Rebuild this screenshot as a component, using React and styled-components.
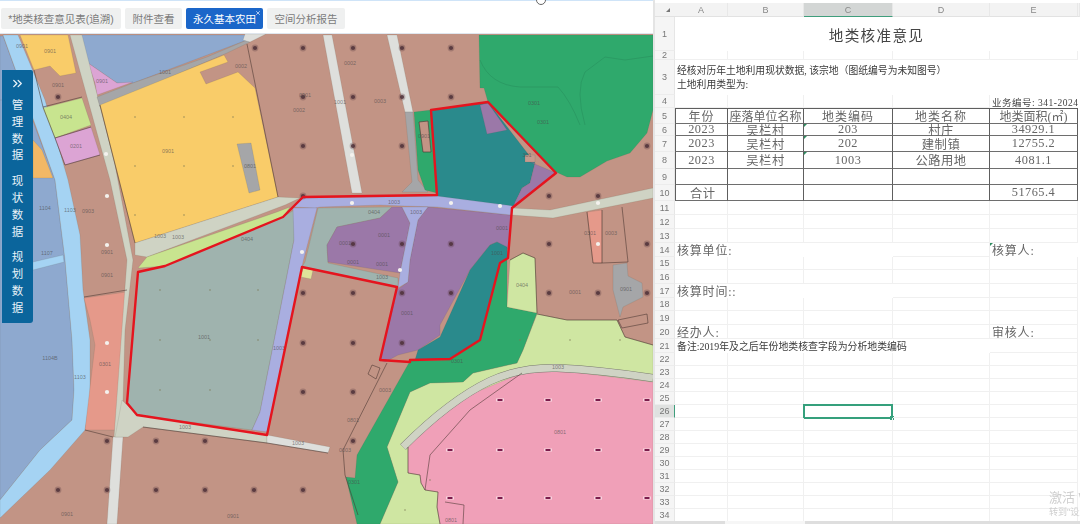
import React from 'react'
import styled, { createGlobalStyle } from 'styled-components'
import { ChevronsRight, X } from 'lucide-react'

const GlobalStyle = createGlobalStyle`
  html, body { margin: 0; padding: 0; background: #fff; overflow: hidden; }
  body { font-family: "Liberation Sans", "Noto Sans CJK SC", sans-serif; }
`

const Page = styled.div`
  width: 1080px;
  height: 524px;
  display: flex;
  overflow: hidden;
  filter: blur(0.4px);
`
const LeftPane = styled.div`
  position: relative;
  width: 653px;
  flex: none;
  display: flex;
  flex-direction: column;
  border-right: 2px solid #e4e4e4;
`
const TabBar = styled.div`
  height: 34px;
  flex: none;
  box-sizing: border-box;
  border-top: 1px solid #cfe4f8;
  padding: 7px 0 0 1px;
  display: flex;
  align-items: flex-start;
  gap: 4px;
  background: #fff;
  border-bottom: 1px solid #dfe6ee;
`
const Tab = styled.div`
  position: relative;
  height: 21px;
  width: ${p => p.$w}px;
  box-sizing: border-box;
  display: flex;
  align-items: center;
  justify-content: center;
  border-radius: 2px;
  font-size: 10.5px;
  white-space: nowrap;
  background: ${p => (p.$active ? '#1b66c9' : '#eff0f0')};
  color: ${p => (p.$active ? '#fff' : '#7b7b7b')};
`
const TabClose = styled(X)`
  position: absolute;
  top: 2px;
  right: 2px;
  width: 6px;
  height: 6px;
  color: #dfeaff;
`
const Cursor = styled.div`
  position: absolute;
  left: 536px;
  top: -5px;
  width: 8px;
  height: 8px;
  border: 1px solid #666;
  border-radius: 50%;
  background: #fff;
`
const MapSvg = styled.svg`
  display: block;
  width: 653px;
  height: 490px;
  background: #c29485;
`
const SideNav = styled.div`
  position: absolute;
  left: 2px;
  top: 70px;
  width: 31px;
  height: 253px;
  box-sizing: border-box;
  background: #0b659c;
  border-radius: 0 2px 3px 0;
  padding-top: 6px;
  display: flex;
  flex-direction: column;
  align-items: center;
  color: #e8f2f8;
`
const NavGroup = styled.div`
  display: flex;
  flex-direction: column;
  align-items: center;
  margin-top: ${p => p.$top}px;
`
const NavChar = styled.span`
  height: 16.8px;
  line-height: 16.8px;
  font-size: 11.5px;
`

const Sheet = styled.div`
  position: relative;
  flex: 1;
  min-width: 0;
  height: 524px;
  overflow: hidden;
  background: #fff;
  padding-top: 3px;
  box-sizing: border-box;
  font-family: "Liberation Serif", "Noto Sans CJK SC", serif;
`
const SheetRow = styled.div`
  display: grid;
  grid-template-columns: 20px 53px 76px 89px 97px 88px 2px;
  grid-template-rows: ${p => p.$h}px;
  height: ${p => p.$h}px;
`
const CornerHead = styled.div`
  background: #f3f3f3;
  border-bottom: 1px solid #e2e2e2;
  position: relative;
  &::after {
    content: '';
    position: absolute;
    right: 5px;
    bottom: 4px;
    border-left: 4px solid transparent;
    border-bottom: 4px solid #777;
  }
`
const ColHead = styled.div`
  display: flex;
  align-items: center;
  justify-content: center;
  font: 9px "Liberation Sans", sans-serif;
  color: #888;
  box-sizing: border-box;
  background: ${p => (p.$on ? '#d3d6d5' : '#f3f3f3')};
  border-bottom: ${p => (p.$on ? '1.5px solid #3f9e7c' : '1px solid #e2e2e2')};
  border-right: 1px solid #e8e8e8;
`
const RowHead = styled.div`
  display: flex;
  align-items: center;
  justify-content: center;
  font: 9px "Liberation Sans", sans-serif;
  color: #777;
  box-sizing: border-box;
  background: ${p => (p.$on ? '#dfe1e0' : '#f5f5f5')};
  border-right: ${p => (p.$on ? '1.5px solid #3f9e7c' : '1px solid #e6e6e6')};
  border-bottom: 1px solid #ececec;
`
const Cell = styled.div`
  position: relative;
  grid-column: span ${p => p.$span || 1};
  box-sizing: border-box;
  min-width: 0;
  border-right: ${p => (p.$plain ? 'none' : '1px solid #f0f0f0')};
  border-bottom: ${p => (p.$plain ? 'none' : '1px solid #f0f0f0')};
`
const TitleCell = styled(Cell)`
  display: flex;
  align-items: center;
  justify-content: center;
  font-size: 14.6px;
  letter-spacing: 1.3px;
  color: #444;
`
const NoteCell = styled(Cell)`
  display: flex;
  flex-direction: column;
  justify-content: center;
  padding-left: 2px;
  font-size: 9.8px;
  line-height: 13.5px;
  color: #3a3a3a;
  white-space: nowrap;
`
const NumberCell = styled(Cell)`
  display: flex;
  align-items: center;
  font-size: 9.5px;
  letter-spacing: 0.5px;
  color: #444;
  white-space: nowrap;
  padding-left: 2px;
`
const BoxCell = styled.div`
  position: relative;
  box-sizing: border-box;
  min-width: 0;
  display: flex;
  align-items: center;
  justify-content: ${p => (p.$left ? 'flex-start' : 'center')};
  padding-left: ${p => (p.$left ? 14 : 0)}px;
  font-size: 12.3px;
  letter-spacing: 0.5px;
  color: #666;
  white-space: nowrap;
  border-right: 1.5px solid #5e5e5e;
  border-bottom: 1.5px solid #6e6e6e;
  border-left: ${p => (p.$first ? '1.5px solid #5e5e5e' : 'none')};
  border-top: ${p => (p.$top ? '1.5px solid #5e5e5e' : 'none')};
  &::before {
    content: '';
    display: ${p => (p.$flag ? 'block' : 'none')};
    position: absolute;
    left: 0;
    top: 0;
    border-top: 3px solid #2f8c60;
    border-right: 3px solid transparent;
  }
`
const HeadText = styled.span`
  font-size: 12px;
  letter-spacing: ${p => p.$gap || 0}px;
`
const FormCell = styled(Cell)`
  display: flex;
  align-items: center;
  padding-left: 2px;
  font-size: 12px;
  letter-spacing: 0.8px;
  color: #666;
  white-space: nowrap;
  &::before {
    content: '';
    display: ${p => (p.$flag ? 'block' : 'none')};
    position: absolute;
    left: 0;
    top: 0;
    border-top: 3px solid #2f8c60;
    border-right: 3px solid transparent;
  }
`
const RemarkCell = styled(Cell)`
  display: flex;
  align-items: center;
  padding-left: 2px;
  font-size: 9.9px;
  color: #3a3a3a;
  white-space: nowrap;
`
const SelectedCell = styled(Cell)`
  border: 2px solid #35a07c;
  margin: -1px 0 -1px -1px;
  &::after {
    content: '';
    position: absolute;
    right: -3px;
    bottom: -3px;
    width: 4px;
    height: 4px;
    background: #35a07c;
  }
`
const ScrollTrack = styled.div`
  position: absolute;
  left: 0;
  right: 0;
  bottom: 0;
  height: 3px;
  background: #dedede;
`
const ScrollThumb = styled.div`
  width: 80px;
  height: 3px;
  margin-left: 70px;
  background: #f6f6f6;
`
const Watermark = styled.div`
  position: absolute;
  left: 394px;
  top: 489px;
  color: #cfcfcf;
  white-space: nowrap;
  font-family: "Liberation Sans", "Noto Sans CJK SC", sans-serif;
  font-size: 13px;
  line-height: 17px;
`
const WatermarkSub = styled.div`
  font-size: 9px;
  line-height: 12px;
`

const P = {
  water: '#8ea9cf', river: '#a5d3f3', road: '#cfd3c4', white: '#dedfdc', gray: '#a5a6a8',
  yellow: '#f9cc69', lime: '#c8e48f', pale: '#cfe6a2', pink: '#dca4d4', salmon: '#e5998a',
  green: '#2fa96c', teal: '#2a8a8c', purple: '#9b78a8', sage: '#9fb3ae', lav: '#a9aee0', rose: '#f0a0b8',
}

const shapes = [
  [P.water, '0,36 3,36 30,110 0,110'],
  [P.water, '0,100 25,100 55,180 65,260 72,340 74,390 72,420 40,450 0,500'],
  [P.water, '80,35 253,35 247,40 133,83 117,83 88,63'],
  [P.river, '3,35 18,35 45,100 68,180 80,235 83,290 90,340 90,400 85,430 50,470 0,518 0,500 40,450 72,420 74,390 72,340 65,260 55,180 30,110'],
  [P.river, '33,262 63,255 64,262 33,270'],
  ['#f2b866', '33,140 42,150 53,178 33,178'],
  [P.yellow, '20,35 68,35 76,73 60,76 50,66 34,70'],
  [P.pink, '88,63 117,83 133,82 97,95 95,83'],
  [P.lime, '43,108 82,98 91,125 55,138'],
  [P.pink, '55,138 91,127 100,155 65,165'],
  [P.salmon, '84,298 126,292 115,430 85,430 95,345 90,320'],
  [P.road, '70,35 82,35 115,165 133,260 125,330 122,436 114,437 127,260 110,180'],
  [P.white, '113,437 123,437 117,524 107,524'],
  [P.gray, '97,97 133,83 207,57 247,40 250,42 227,53 100,107'],
  [P.yellow, '100,105 224,55 228,62 200,72 206,84 238,72 255,88 278,197 135,243'],
  [P.gray, '237,144 251,143 260,190 249,193'],
  [P.white, '245,34 266,34 250,42 243,40'],
  [P.white, '323,35 332,35 362,193 352,193'],
  [P.white, '387,35 397,35 413,112 405,112'],
  [P.gray, '405,112 413,112 418,180 428,192 402,192 412,182'],
  [P.green, '479,35 653,35 653,110 647,133 630,153 607,161 580,177 567,177 556,172 488,102 484,88 480,88'],
  [P.green, '414,112 431,110 437,193 425,190 418,170'],
  ['#c29485', '419,122 428,121 431,152 423,152'],
  [P.teal, '431,110 488,102 535,163 530,183 522,188 513,208 437,197'],
  [P.purple, '480,105 488,103 507,130 487,134'],
  [P.purple, '530,162 556,173 513,208 515,202 522,188 530,183 535,163'],
  ['#c79a8e', '525,155 535,155 535,162 525,162'],
  [P.road, '512,208 550,210 653,188 653,198 553,218 512,215'],
  [P.road, '135,243 278,197 300,198 285,205 147,257 135,255'],
  [P.lime, '138,268 147,257 277,212 290,207 283,217 165,266'],
  [P.sage, '138,272 165,266 283,217 294,210 294,240 260,412 252,430 137,415 127,403'],
  [P.road, '127,405 137,415 267,435 267,443 143,427 128,437 115,437 122,400'],
  [P.white, '267,435 330,447 328,453 267,443'],
  [P.sage, '318,208 392,207 380,218 337,227 327,245 328,263 398,278 398,287 302,267 305,262'],
  [P.purple, '337,227 380,218 392,207 402,207 410,223 400,273 328,262 327,245'],
  [P.purple, '428,207 511,215 509,250 497,242 490,245 470,270 440,325 440,335 418,350 398,355 385,362 380,360 397,290 408,282 410,260 418,220'],
  [P.teal, '497,242 507,247 508,258 500,263 480,340 450,359 415,360 418,350 440,337 470,270 490,245'],
  [P.lav, '293,207 303,198 437,196 513,206 511,215 437,207 405,206 380,205 320,207 315,208'],
  [P.lav, '293,208 317,208 303,262 268,432 252,430 260,412 294,240'],
  [P.lav, '402,207 428,207 418,220 410,260 408,282 398,288 400,273 410,223'],
  ['#dfe29a', '303,268 313,270 311,279 301,277'],
  [P.salmon, '587,212 602,210 602,263 593,263'],
  [P.gray, '613,265 627,263 628,276 642,283 643,297 623,307 620,317 613,290'],
  [P.pale, '537,314 567,320 617,320 625,337 653,345 653,524 380,524 398,482 387,447 410,392 430,383 463,382 473,373 517,363 523,350'],
  [P.green, '410,361 450,360 480,340 500,263 507,259 507,307 537,313 523,350 517,363 473,373 463,382 430,383 410,392 387,447 398,482 380,524 357,524 346,477 355,478 357,455'],
  [P.pale, '510,260 523,253 535,258 537,313 507,307'],
  [P.rose, '522,373 557,370 653,382 653,524 440,524 437,507 438,492 425,490 421,483 420,475 408,473 408,447 450,403'],
]

const lines = [
  '247,44 278,197', '34,70 43,107 55,138 65,165', '43,107 82,97', '55,138 91,127', '65,165 100,155',
  '84,297 127,290', '85,430 113,437', '100,105 135,243', '143,427 267,443', '267,443 328,453',
  '587,212 593,263 602,263 602,210', '622,207 628,262 602,263', '537,314 567,320 617,320 625,337 653,345',
  '618,320 647,314 648,323 622,328 618,320', '372,365 380,368 376,379 368,374 372,365',
  '387,363 343,450 345,475 358,515', '510,260 523,253 535,258 537,313', '419,122 428,121 431,152 423,152 419,122',
  '522,373 470,410 430,455 425,490', '445,502 464,505 463,524', '408,447 408,473 420,475 421,483 425,490 438,492 437,507 440,524',
]

const brownDots = [
  [255, 48], [303, 48], [353, 48], [402, 48], [451, 48],
  [58, 97], [303, 97], [353, 97], [402, 97], [451, 97],
  [303, 146], [353, 146], [402, 146], [647, 146],
  [303, 196], [549, 196], [598, 196],
  [353, 244], [402, 244], [451, 244], [549, 244], [647, 244],
  [353, 293], [402, 293], [451, 293], [549, 293], [598, 293], [647, 293],
  [303, 293], [303, 343], [353, 343], [402, 343], [303, 392], [353, 392], [353, 441],
  [107, 441], [156, 441], [205, 441],
  [58, 490], [107, 490], [156, 490], [205, 490], [254, 490], [303, 490],
]
const whiteDots = [
  [106, 154], [107, 196], [107, 245], [107, 343], [107, 392], [598, 203], [598, 244],
  [352, 155], [352, 203], [451, 203], [500, 206], [302, 252], [400, 270],
]
const pinkDots = [
  [500, 400], [548, 400], [598, 400], [647, 400],
  [450, 450], [500, 450], [548, 450], [598, 450], [647, 450],
  [450, 498], [500, 498], [548, 498], [598, 498], [647, 498],
]
const faintDots = [
  [135, 117], [184, 117], [233, 117], [135, 166], [184, 166], [233, 166], [135, 215], [184, 215],
  [160, 290], [210, 290], [258, 290], [160, 340], [210, 340], [258, 340], [160, 390], [210, 390],
  [520, 340], [570, 340], [620, 340], [430, 480], [405, 510],
]

const labels = [
  [22, 48, '0901'], [50, 53, '0901'], [58, 87, '0901'], [66, 119, '0404'], [76, 148, '0201'],
  [102, 83, '0901'], [168, 153, '0901'], [165, 74, '1001'], [241, 68, '0002'], [299, 112, '0002'],
  [350, 65, '0002'], [340, 104, '1001'], [250, 168, '0801'], [88, 213, '0903'], [107, 254, '0901'],
  [107, 277, '0901'], [45, 210, '1104'], [70, 212, '1103'], [47, 255, '1107'], [50, 360, '1104B'],
  [80, 379, '1103'], [105, 366, '0301'], [178, 239, '1003'], [160, 238, '1003'], [247, 241, '0404'],
  [204, 339, '1001'], [279, 350, '1003'], [185, 429, '1003'], [298, 445, '1003'], [67, 516, '0901'],
  [233, 518, '0901'], [305, 97, '0901'], [380, 103, '0003'], [543, 124, '0301'], [424, 138, '0901'],
  [394, 204, '1003'], [416, 214, '1003'], [374, 214, '0404'], [384, 237, '0001'], [345, 245, '0001'],
  [353, 264, '0001'], [382, 266, '0001'], [382, 279, '1003'], [502, 230, '0001'], [497, 255, '1001'],
  [407, 315, '0001'], [522, 287, '0404'], [575, 294, '0001'], [611, 235, '0003'], [590, 235, '0301'],
  [626, 291, '0901'], [457, 363, '0301'], [558, 369, '1003'], [385, 392, '0003'], [345, 452, '0003'],
  [353, 422, '0801'], [560, 434, '0801'], [451, 522, '0801'], [534, 105, '0301'], [354, 484, '0301'],
  [527, 157, '301'],
]

const boundary = '303,197 437,195 431,110 488,102 556,173 512,208 508,258 500,263 480,340 450,359 410,360 410,362 380,360 397,287 302,267 267,435 137,415 127,403 138,272 165,266 283,217'
const curveRoad = 'M403 447 Q450 400 490 381 Q520 367 557 368 Q600 370 653 378'

function LandMap() {
  return (
    <MapSvg viewBox="0 34 653 490">
      {shapes.map(([fill, pts], i) => (
        <polygon key={i} points={pts} fill={fill} stroke="#4d4d40" strokeOpacity="0.25" strokeWidth="0.5" />
      ))}
      <path d={curveRoad} fill="none" stroke="#77786c" strokeWidth="8" />
      <path d={curveRoad} fill="none" stroke={P.road} strokeWidth="7" />
      <path d="M480 60 Q490 85 520 87 L558 87 Q570 100 580 125 M585 125 Q575 90 585 72 L605 57 L625 60 L653 56" fill="none" stroke="#23794f" strokeOpacity="0.5" strokeWidth="0.6" />
      {lines.map((pts, i) => (
        <polyline key={i} points={pts} fill="none" stroke="#4a3530" strokeOpacity="0.7" strokeWidth="0.8" />
      ))}
      {faintDots.map(([x, y], i) => (
        <circle key={i} cx={x} cy={y} r="0.9" fill="#7c7a55" opacity="0.5" />
      ))}
      {brownDots.map(([x, y], i) => (
        <g key={i}>
          <circle cx={x} cy={y} r="3.4" fill="#5b3a42" opacity="0.3" />
          <circle cx={x} cy={y} r="2.1" fill="#4d3038" opacity="0.85" />
        </g>
      ))}
      {whiteDots.map(([x, y], i) => (
        <circle key={i} cx={x} cy={y} r="2.1" fill="#f4f2ee" />
      ))}
      {pinkDots.map(([x, y], i) => (
        <g key={i}>
          <rect x={x - 4} y={y - 1.5} width="8" height="3" fill="#fff" opacity="0.55" />
          <rect x={x - 2.5} y={y - 1} width="5" height="2" fill="#7a1c4c" />
        </g>
      ))}
      {labels.map(([x, y, t], i) => (
        <text key={i} x={x} y={y} fontSize="5.5" fontFamily="Liberation Sans, sans-serif" fill="#4a4a4a" fillOpacity="0.65" textAnchor="middle">{t}</text>
      ))}
      <polygon points={boundary} fill="none" stroke="#e5141e" strokeWidth="2.4" strokeLinejoin="round" />
    </MapSvg>
  )
}

const navGroups = [['管', '理', '数', '据'], ['现', '状', '数', '据'], ['规', '划', '数', '据']]
const colNames = ['A', 'B', 'C', 'D', 'E']

const tableRows = [
  [6, 12, '2023', '吴栏村', '203', '村庄', '34929.1'],
  [7, 16, '2023', '吴栏村', '202', '建制镇', '12755.2'],
  [8, 17, '2023', '吴栏村', '1003', '公路用地', '4081.1'],
]

const blankHeights = {
  11: 14, 12: 14, 13: 14, 15: 13, 16: 14, 18: 13, 19: 14,
  22: 13, 23: 13, 24: 13, 25: 13, 26: 13, 27: 13, 28: 13, 29: 13, 30: 13, 31: 13, 32: 13, 33: 13, 34: 13,
}

function BlankRow({ n }) {
  return (
    <SheetRow $h={blankHeights[n]}>
      <RowHead $on={n === 26}>{n}</RowHead>
      <Cell />
      <Cell />
      {n === 26 ? <SelectedCell /> : <Cell />}
      <Cell />
      <Cell />
    </SheetRow>
  )
}

function Spreadsheet() {
  return (
    <Sheet>
      <SheetRow $h={14}>
        <CornerHead />
        {colNames.map(c => <ColHead key={c} $on={c === 'C'}>{c}</ColHead>)}
        <ColHead />
      </SheetRow>
      <SheetRow $h={34}>
        <RowHead>1</RowHead>
        <TitleCell $span={5} $plain>地类核准意见</TitleCell>
      </SheetRow>
      <SheetRow $h={9}>
        <RowHead>2</RowHead><Cell /><Cell /><Cell /><Cell /><Cell />
      </SheetRow>
      <SheetRow $h={35}>
        <RowHead>3</RowHead>
        <NoteCell $span={5} $plain>
          <span>经核对历年土地利用现状数据, 该宗地（图纸编号为未知图号）</span>
          <span>土地利用类型为:</span>
        </NoteCell>
      </SheetRow>
      <SheetRow $h={13}>
        <RowHead>4</RowHead>
        <Cell /><Cell /><Cell /><Cell />
        <NumberCell $plain>业务编号: 341-2024</NumberCell>
      </SheetRow>
      <SheetRow $h={16}>
        <RowHead>5</RowHead>
        <BoxCell $first $top><HeadText $gap={1}>年份</HeadText></BoxCell>
        <BoxCell $top><HeadText>座落单位名称</HeadText></BoxCell>
        <BoxCell $top><HeadText $gap={1}>地类编码</HeadText></BoxCell>
        <BoxCell $top><HeadText $gap={1}>地类名称</HeadText></BoxCell>
        <BoxCell $top><HeadText>地类面积(㎡)</HeadText></BoxCell>
      </SheetRow>
      {tableRows.map(([n, h, year, place, code, name, area]) => (
        <SheetRow key={n} $h={h}>
          <RowHead>{n}</RowHead>
          <BoxCell $first>{year}</BoxCell>
          <BoxCell>{place}</BoxCell>
          <BoxCell $flag>{code}</BoxCell>
          <BoxCell>{name}</BoxCell>
          <BoxCell>{area}</BoxCell>
        </SheetRow>
      ))}
      <SheetRow $h={16}>
        <RowHead>9</RowHead>
        <BoxCell $first /><BoxCell /><BoxCell /><BoxCell /><BoxCell />
      </SheetRow>
      <SheetRow $h={16}>
        <RowHead>10</RowHead>
        <BoxCell $first $left>合计</BoxCell>
        <BoxCell /><BoxCell /><BoxCell />
        <BoxCell>51765.4</BoxCell>
      </SheetRow>
      {[11, 12, 13].map(n => <BlankRow key={n} n={n} />)}
      <SheetRow $h={14}>
        <RowHead>14</RowHead>
        <FormCell $span={3} $plain>核算单位:</FormCell>
        <Cell />
        <FormCell $plain $flag>核算人:</FormCell>
      </SheetRow>
      {[15, 16].map(n => <BlankRow key={n} n={n} />)}
      <SheetRow $h={14}>
        <RowHead>17</RowHead>
        <FormCell $span={3} $plain>核算时间::</FormCell>
        <Cell /><Cell />
      </SheetRow>
      {[18, 19].map(n => <BlankRow key={n} n={n} />)}
      <SheetRow $h={14}>
        <RowHead>20</RowHead>
        <FormCell>经办人:</FormCell>
        <Cell /><Cell /><Cell />
        <FormCell>审核人:</FormCell>
      </SheetRow>
      <SheetRow $h={14}>
        <RowHead>21</RowHead>
        <RemarkCell $span={4} $plain>备注:2019年及之后年份地类核查字段为分析地类编码</RemarkCell>
        <Cell />
      </SheetRow>
      {[22, 23, 24, 25, 26, 27, 28, 29, 30, 31, 32, 33, 34].map(n => <BlankRow key={n} n={n} />)}
      <Watermark>
        激活 Windows
        <WatermarkSub>转到"设置"以激活 Windows。</WatermarkSub>
      </Watermark>
      <ScrollTrack><ScrollThumb /></ScrollTrack>
    </Sheet>
  )
}

export default function App() {
  return (
    <Page>
      <GlobalStyle />
      <LeftPane>
        <TabBar>
          <Tab $w={120}>*地类核查意见表(追溯)</Tab>
          <Tab $w={57}>附件查看</Tab>
          <Tab $w={77} $active>永久基本农田<TabClose strokeWidth={3} /></Tab>
          <Tab $w={78}>空间分析报告</Tab>
        </TabBar>
        <Cursor />
        <LandMap />
        <SideNav>
          <ChevronsRight size={15} strokeWidth={2.2} />
          {navGroups.map((chars, i) => (
            <NavGroup key={i} $top={i === 0 ? 6 : 9}>
              {chars.map((c, j) => <NavChar key={j}>{c}</NavChar>)}
            </NavGroup>
          ))}
        </SideNav>
      </LeftPane>
      <Spreadsheet />
    </Page>
  )
}
